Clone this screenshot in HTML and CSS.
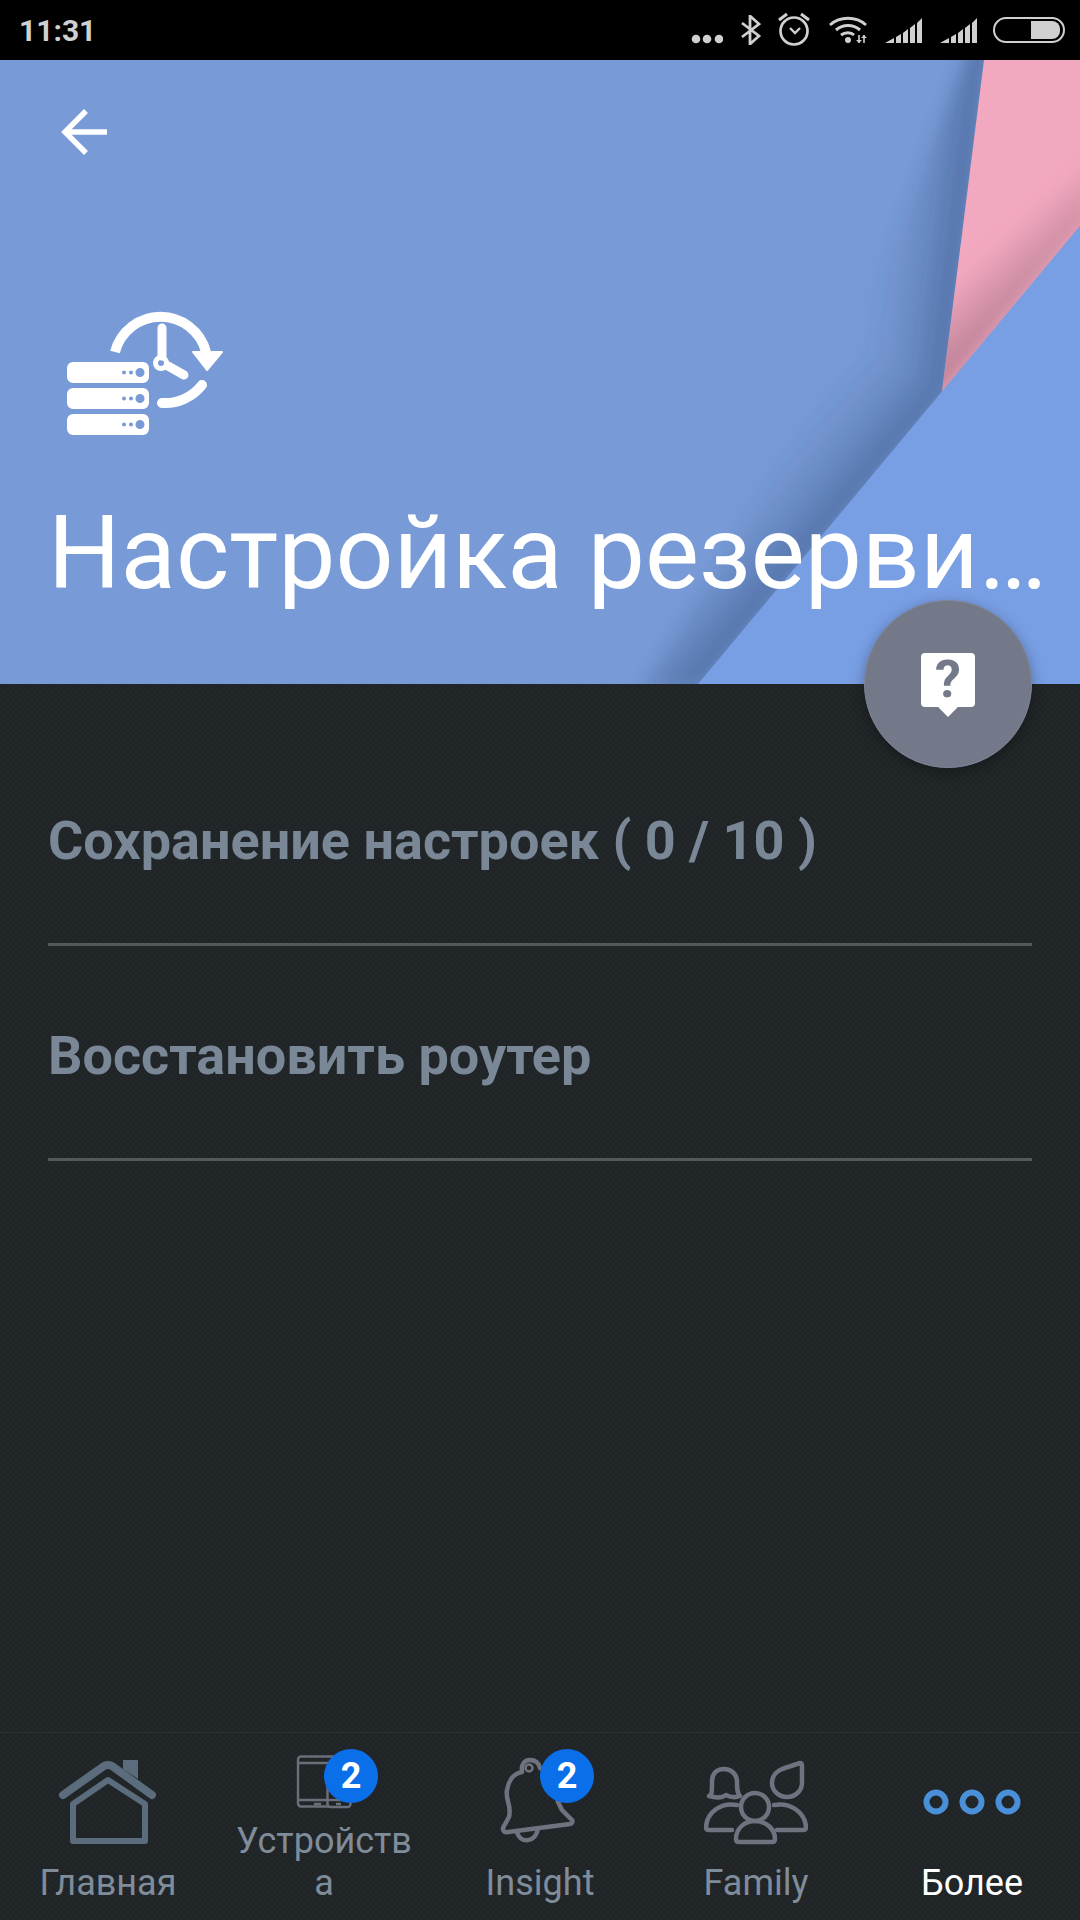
FILE: index.html
```html
<!DOCTYPE html>
<html lang="ru">
<head>
    <meta charset="UTF-8">
    <meta name="viewport" content="width=device-width, initial-scale=1.0">
    <title>Настройка резервного копирования</title>
    <link rel="stylesheet" href="styles.css">
</head>
<body>
<div class="screen">
    <div class="status-bar">
        <span class="status-time">11:31</span>
        <div class="status-icons">
            <svg width="32" height="30" viewBox="692 15 32 30"><circle cx="697" cy="39" r="4.300"/><circle cx="708" cy="39" r="4.300"/><circle cx="720" cy="39" r="4.300"/></svg>
            <svg width="20" height="30" viewBox="742 15 20 30"><path d="M743 23l17 13-9 8V16l9 8-17 13" fill="none" stroke="#d0d0d0" stroke-width="2.800"/></svg>
            <svg width="33" height="30" viewBox="780 15 33 30" overflow="visible"><circle cx="796" cy="31" r="13.500" fill="none" stroke="#d0d0d0" stroke-width="2.700"/><path d="M792 28l5 5 5-5" fill="none" stroke="#d0d0d0" stroke-width="2.400"/><path d="M781 20l8-6M811 20l-8-6" stroke="#d0d0d0" stroke-width="3" fill="none"/></svg>
            <svg width="39" height="30" viewBox="830 15 39 30"><g fill="none" stroke="#d0d0d0" stroke-width="3"><path d="M831 25c10-9 26-9 36 0"/><path d="M837 30c7-6 17-6 24 0"/><path d="M842 35c4-3 10-3 13 0"/></g><circle cx="849" cy="40" r="3"/><path d="M860 35v8M865 35v8" stroke="#d0d0d0" stroke-width="1.600"/><path d="M857 40h6l-3 3zM862 38h6l-3-3z"/></svg>
            <svg width="37" height="30" viewBox="886 15 37 30"><path d="M886 43l9-5v5zM897 37l5-3v9h-5zM904 33l5-4v14h-5zM911 28l5-4v19h-5zM918 23l5-5v25h-5z"/></svg>
            <svg width="37" height="30" viewBox="886 15 37 30"><path d="M886 43l9-5v5zM897 37l5-3v9h-5zM904 33l5-4v14h-5zM911 28l5-4v19h-5zM918 23l5-5v25h-5z"/></svg>
            <div class="battery"><div class="battery-level"></div></div>
        </div>
    </div>

    <header class="top">
        <svg class="top-bg" width="1080" height="624" viewBox="0 60 1080 624">
            <defs>
                <filter id="soft" x="-30%" y="-30%" width="160%" height="160%"><feGaussianBlur stdDeviation="8"/></filter>
                <linearGradient id="shadeTop" gradientUnits="userSpaceOnUse" x1="963" y1="226" x2="880" y2="216">
                    <stop offset="0" stop-color="#2f4c7e" stop-opacity=".5"/>
                    <stop offset=".5" stop-color="#2f4c7e" stop-opacity=".17"/>
                    <stop offset="1" stop-color="#2f4c7e" stop-opacity="0"/>
                </linearGradient>
                <linearGradient id="shadeLow" gradientUnits="userSpaceOnUse" x1="820" y1="538" x2="752" y2="481">
                    <stop offset="0" stop-color="#2f4c7e" stop-opacity=".5"/>
                    <stop offset=".5" stop-color="#2f4c7e" stop-opacity=".17"/>
                    <stop offset="1" stop-color="#2f4c7e" stop-opacity="0"/>
                </linearGradient>
                <linearGradient id="shadePink" gradientUnits="userSpaceOnUse" x1="1020" y1="310" x2="975" y2="262">
                    <stop offset="0" stop-color="#a87488" stop-opacity=".75"/>
                    <stop offset="1" stop-color="#a87488" stop-opacity="0"/>
                </linearGradient>
                <clipPath id="pinkClip"><polygon points="984,60 1080,60 1080,226 942,392"/></clipPath>
            </defs>
            <rect x="0" y="60" width="1080" height="624" fill="#789ad6"/>
            <g filter="url(#soft)">
                <polygon points="990,40 948,392 850,350 972,40" fill="url(#shadeTop)"/>
                <polygon points="948,392 698,690 640,690 850,350" fill="url(#shadeLow)"/>
            </g>
            <polygon points="984,60 1080,60 1080,226 942,392" fill="#f2a8bf"/>
            <g clip-path="url(#pinkClip)"><polygon points="1090,216 932,404 930,310 1090,130" fill="url(#shadePink)" filter="url(#soft)"/></g>
            <polygon points="1080,226 1080,684 698,684" fill="#789ee4"/>
        </svg>
        <svg class="back" width="48" height="48" viewBox="0 0 48 48"><path d="M47 24H4M26 3L5 24l21 21" fill="none" stroke="#fff" stroke-width="5.500"/></svg>
        <svg class="backup" width="160" height="130" viewBox="64 308 160 130">
            <g fill="#fff">
                <path fill-rule="evenodd" d="M73 363h70a6 6 0 0 1 6 6v9a6 6 0 0 1-6 6H73a6 6 0 0 1-6-6v-9a6 6 0 0 1 6-6zm67 6a4.500 4.500 0 1 0 0 9 4.500 4.500 0 0 0 0-9zm-9 2.500a2 2 0 1 0 0 4 2 2 0 0 0 0-4zm-7 0a2 2 0 1 0 0 4 2 2 0 0 0 0-4z"/>
                <path fill-rule="evenodd" d="M73 389h70a6 6 0 0 1 6 6v9a6 6 0 0 1-6 6H73a6 6 0 0 1-6-6v-9a6 6 0 0 1 6-6zm67 6a4.500 4.500 0 1 0 0 9 4.500 4.500 0 0 0 0-9zm-9 2.500a2 2 0 1 0 0 4 2 2 0 0 0 0-4zm-7 0a2 2 0 1 0 0 4 2 2 0 0 0 0-4z"/>
                <path fill-rule="evenodd" d="M73 415h70a6 6 0 0 1 6 6v9a6 6 0 0 1-6 6H73a6 6 0 0 1-6-6v-9a6 6 0 0 1 6-6zm67 6a4.500 4.500 0 1 0 0 9 4.500 4.500 0 0 0 0-9zm-9 2.500a2 2 0 1 0 0 4 2 2 0 0 0 0-4zm-7 0a2 2 0 1 0 0 4 2 2 0 0 0 0-4z"/>
                <path d="M193 353h29l-15 18z" stroke="#fff" stroke-width="2" stroke-linejoin="round"/>
            </g>
            <g fill="none" stroke="#fff">
                <path d="M115 353a47 47 0 0 1 91 0" stroke-width="10"/>
                <path d="M202 386a47 47 0 0 1-40 18" stroke-width="10" stroke-linecap="round"/>
                <path d="M162 329v28M168 367l16 9" stroke-width="9" stroke-linecap="round"/>
                <circle cx="161" cy="364" r="5.500" stroke-width="5"/>
            </g>
        </svg>
        <h1 class="title">Настройка резерви…</h1>
        <button class="help">
            <span class="help-bubble">?</span>
        </button>
    </header>

    <main class="list">
        <div class="list-item">Сохранение настроек ( 0 / 10 )</div>
        <div class="list-item">Восстановить роутер</div>
    </main>

    <nav class="tabs">
        <div class="tab">
            <div class="tab-icon">
                <svg width="100" height="88" viewBox="58 1757 100 88" fill="none" stroke="#5b6c7c" stroke-linejoin="round">
                    <path d="M123 1760h15v19l-15-10z" fill="#5b6c7c" stroke="none"/>
                    <path d="M63 1795l41-29q4-2 8 0l40 29" stroke-width="8" stroke-linecap="round"/>
                    <path d="M73 1804l35-24 37 24v37H73z" stroke-width="6"/>
                </svg>
            </div>
            <span class="tab-label">Главная</span>
        </div>
        <div class="tab">
            <div class="tab-icon tab-icon-short">
                <svg width="80" height="52" viewBox="284 1757 80 52" overflow="visible" fill="none" stroke="#6b6f7a" stroke-width="2.400">
                    <rect x="298" y="1756.500" width="50" height="50" rx="3"/>
                    <path d="M298 1763h50M298 1800h29"/>
                    <rect x="327.500" y="1775" width="23" height="32" rx="3" fill="#1f2427"/>
                    <path d="M327 1800h23"/>
                    <path d="M314 1804h7M336 1804h5" stroke-width="2.600"/>
                </svg>
                <span class="badge">2</span>
            </div>
            <span class="tab-label">Устройства</span>
        </div>
        <div class="tab">
            <div class="tab-icon">
                <svg width="100" height="88" viewBox="490 1757 100 88" overflow="visible" fill="none" stroke="#6f7380" stroke-width="4.500" stroke-linejoin="round">
                    <path d="M509 1817c3-12-4-17-2-27 2-12 9-17 15-18-1-7 2-12 8-12s9 4 10 8c10 4 15 17 18 34l4 8 10 10c1 2 0 4-2 4l-62 8c-5 1-6-3-4-6z"/>
                    <circle cx="529" cy="1768" r="3.500" stroke-width="2.500"/>
                    <path d="M517 1832c3 12 19 11 21 -4"/>
                </svg>
                <span class="badge">2</span>
            </div>
            <span class="tab-label">Insight</span>
        </div>
        <div class="tab">
            <div class="tab-icon">
                <svg width="104" height="88" viewBox="704 1757 104 88" fill="none" stroke="#6f7380" stroke-width="4.500" stroke-linejoin="round" stroke-linecap="round">
                    <path d="M709 1796c3-1 3-4 3-14 0-9 5-13 12-13s13 5 13 13c0 10 1 12 3 14-5 2-10 1-14-1-4 3-10 3-17 1z"/>
                    <path d="M800 1763c2 0 2 1 2 3v17c0 8-7 14-15 14s-15-6-15-14c0-7 3-11 10-14z"/>
                    <circle cx="755" cy="1807" r="14"/>
                    <path d="M737 1805c-16-3-30 7-31 22 0 2 1 3 3 3h23"/>
                    <path d="M774 1805c16-3 31 7 32 22 0 2-1 3-3 3h-26"/>
                    <path d="M739 1842c-2 0-3-1-3-3 0-10 8-18 19-18s20 8 20 18c0 2-1 3-3 3z"/>
                </svg>
            </div>
            <span class="tab-label">Family</span>
        </div>
        <div class="tab tab-active">
            <div class="tab-icon">
                <svg width="100" height="88" viewBox="922 1757 100 88" fill="none" stroke="#4a90d9" stroke-width="6">
                    <circle cx="936" cy="1802" r="9.500"/>
                    <circle cx="972" cy="1802" r="9.500"/>
                    <circle cx="1008" cy="1802" r="9.500"/>
                </svg>
            </div>
            <span class="tab-label">Более</span>
        </div>
    </nav>
</div>
</body>
</html>
```

FILE: styles.css
```css
* {
    box-sizing: border-box;
}
body {
    margin: 0;
    font-family: Roboto, "Liberation Sans", sans-serif;
    background-color: #1f2427;
}
.screen {
    width: 1080px;
    height: 1920px;
    display: flex;
    flex-direction: column;
    overflow: hidden;
    background-color: #1f2427;
    background-image:
        linear-gradient(45deg, rgba(255,255,255,.016) 25%, transparent 25%, transparent 75%, rgba(255,255,255,.016) 75%),
        linear-gradient(45deg, rgba(255,255,255,.016) 25%, transparent 25%, transparent 75%, rgba(255,255,255,.016) 75%);
    background-size: 6px 6px;
    background-position: 0 0, 3px 3px;
}

/* status bar */
.status-bar {
    height: 60px;
    background-color: #000;
    display: flex;
    justify-content: space-between;
    align-items: center;
    padding: 0 15px 0 19px;
    flex-shrink: 0;
}
.status-time {
    font-size: 30px;
    font-weight: 700;
    color: #d0d0d0;
}
.status-icons {
    display: flex;
    align-items: center;
    fill: #d0d0d0;
    gap: 17.5px;
}
.status-icons svg {
    display: block;
}
.battery {
    width: 72px;
    height: 26px;
    margin-left: -1px;
    border: 2px solid #d0d0d0;
    border-radius: 13px;
    display: flex;
    justify-content: flex-end;
    align-items: center;
    padding-right: 3px;
}
.battery-level {
    width: 29px;
    height: 18px;
    background-color: #d0d0d0;
    border-radius: 0 8px 8px 0;
}

/* blue header */
.top {
    position: relative;
    height: 624px;
    flex-shrink: 0;
    display: flex;
    flex-direction: column;
    align-items: flex-start;
    padding: 48px 0 0 60px;
}
.top-bg {
    position: absolute;
    left: 0;
    top: 0;
}
.back,
.backup,
.title {
    position: relative;
}
.backup {
    margin: 151px 0 0 4px;
}
.title {
    margin: 56px 0 0 -12px;
    font-size: 101.8px;
    line-height: 122px;
    font-weight: 400;
    color: #fff;
    white-space: nowrap;
}
.help {
    position: absolute;
    left: 864px;
    top: 540px;
    width: 168px;
    height: 168px;
    padding: 0 0 8px;
    border: 1px solid #80869a;
    border-radius: 50%;
    background-color: #737989;
    box-shadow: 0 4px 14px rgba(0,0,0,.3);
    display: flex;
    justify-content: center;
    align-items: center;
    z-index: 2;
}
.help-bubble {
    position: relative;
    width: 54px;
    height: 54px;
    border-radius: 4px;
    background-color: #fff;
    color: #737989;
    font-family: Roboto, "Liberation Sans", sans-serif;
    font-size: 52px;
    font-weight: 700;
    line-height: 54px;
    text-align: center;
}
.help-bubble::after {
    content: "";
    position: absolute;
    left: 20px;
    bottom: -7px;
    width: 14px;
    height: 14px;
    background-color: #fff;
    transform: rotate(45deg);
}

/* list */
.list {
    flex: 1;
    padding: 47px 48px 0;
}
.list-item {
    height: 215px;
    padding-top: 80px;
    border-bottom: 3px solid #55585b;
    font-size: 54px;
    line-height: 60px;
    font-weight: 700;
    color: #7a8796;
}

/* bottom tabs */
.tabs {
    height: 188px;
    flex-shrink: 0;
    display: flex;
    border-top: 1px solid #2b2f32;
}
.tab {
    width: 216px;
    display: flex;
    flex-direction: column;
    justify-content: flex-end;
    align-items: center;
    padding: 0 14px 16px;
}
.tab-icon {
    position: relative;
    margin-bottom: 17px;
}
.tab-icon svg {
    display: block;
}
.tab-icon-short {
    margin-bottom: 11px;
}
.tab-label {
    font-size: 36px;
    line-height: 42px;
    color: #7f8c99;
    text-align: center;
    word-break: break-all;
}
.tab-active .tab-label {
    color: #fff;
}
.badge {
    position: absolute;
    top: -8px;
    left: 50px;
    width: 54px;
    height: 54px;
    border-radius: 50%;
    background-color: #0a6fe8;
    color: #fff;
    font-size: 36px;
    font-weight: 700;
    line-height: 54px;
    text-align: center;
}
.tab-icon-short .badge {
    left: 40px;
}
```
